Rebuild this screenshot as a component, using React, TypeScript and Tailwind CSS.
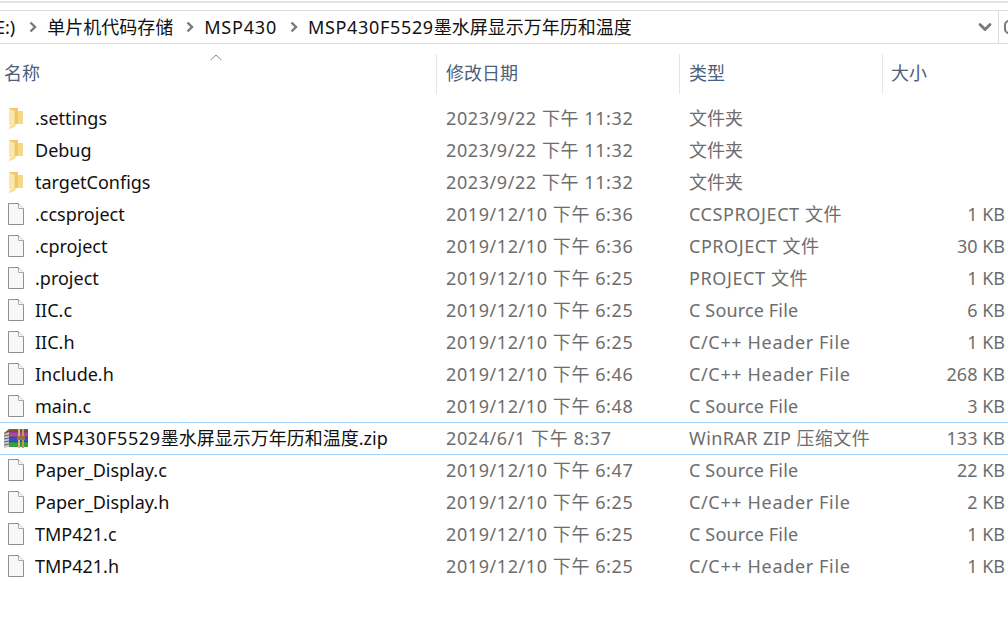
import { ChevronDown } from 'lucide-react';

type Kind = 'folder' | 'file' | 'zip';

const files: { name: string; date: string; type: string; size: string; kind: Kind }[] = [
    { name: '.settings', date: '2023/9/22 下午 11:32', type: '文件夹', size: '', kind: 'folder' },
    { name: 'Debug', date: '2023/9/22 下午 11:32', type: '文件夹', size: '', kind: 'folder' },
    { name: 'targetConfigs', date: '2023/9/22 下午 11:32', type: '文件夹', size: '', kind: 'folder' },
    { name: '.ccsproject', date: '2019/12/10 下午 6:36', type: 'CCSPROJECT 文件', size: '1 KB', kind: 'file' },
    { name: '.cproject', date: '2019/12/10 下午 6:36', type: 'CPROJECT 文件', size: '30 KB', kind: 'file' },
    { name: '.project', date: '2019/12/10 下午 6:25', type: 'PROJECT 文件', size: '1 KB', kind: 'file' },
    { name: 'IIC.c', date: '2019/12/10 下午 6:25', type: 'C Source File', size: '6 KB', kind: 'file' },
    { name: 'IIC.h', date: '2019/12/10 下午 6:25', type: 'C/C++ Header File', size: '1 KB', kind: 'file' },
    { name: 'Include.h', date: '2019/12/10 下午 6:46', type: 'C/C++ Header File', size: '268 KB', kind: 'file' },
    { name: 'main.c', date: '2019/12/10 下午 6:48', type: 'C Source File', size: '3 KB', kind: 'file' },
    { name: 'MSP430F5529墨水屏显示万年历和温度.zip', date: '2024/6/1 下午 8:37', type: 'WinRAR ZIP 压缩文件', size: '133 KB', kind: 'zip' },
    { name: 'Paper_Display.c', date: '2019/12/10 下午 6:47', type: 'C Source File', size: '22 KB', kind: 'file' },
    { name: 'Paper_Display.h', date: '2019/12/10 下午 6:25', type: 'C/C++ Header File', size: '2 KB', kind: 'file' },
    { name: 'TMP421.c', date: '2019/12/10 下午 6:25', type: 'C Source File', size: '1 KB', kind: 'file' },
    { name: 'TMP421.h', date: '2019/12/10 下午 6:25', type: 'C/C++ Header File', size: '1 KB', kind: 'file' },
];

// the fallback font runs narrower than the original on digits and capitals
const typeTracking: Record<string, string> = {
    '文件夹': '',
    'CCSPROJECT 文件': 'tracking-[0.6px]',
    'CPROJECT 文件': 'tracking-[0.55px]',
    'PROJECT 文件': 'tracking-[0.6px]',
    'C Source File': 'tracking-[0.15px]',
    'C/C++ Header File': 'tracking-[0.65px]',
    'WinRAR ZIP 压缩文件': 'tracking-[0.4px]',
};

function Sep() {
    return (
        <svg width="8" height="12" viewBox="0 0 8 12" className="shrink-0">
            <path d="M1.5 1.5 L6 6 L1.5 10.5" fill="none" stroke="#7a7a7a" strokeWidth="2.4" />
        </svg>
    );
}

function FileIcon({ kind }: { kind: Kind }) {
    if (kind === 'folder') {
        return (
            <svg width="16" height="22" viewBox="0 0 16 22">
                <path d="M1.5 1 H10 V17 H1.5 Z" fill="#f0c860" />
                <path d="M10 4 H15 V17 H10 Z" fill="#f6d88a" />
                <path d="M1.5 2 L7 4 V19 L1.5 21.5 Z" fill="#fbe7a8" />
                <path d="M7 4 V19 L1.5 21.5" fill="none" stroke="#e9c46a" strokeWidth="0.7" />
            </svg>
        );
    }
    if (kind === 'zip') {
        return (
            <svg width="26" height="22" viewBox="0 0 26 22">
                <path d="M1 5 L6 1 H25 V7 H1 Z" fill="#7a5a3c" />
                <path d="M1 6 L6 4 V19 L1 20 Z" fill="#c9c9c9" />
                <path d="M1 8 L6 7 M1 11 L6 10 M1 14 L6 13 M1 17 L6 16" stroke="#5f5f6a" strokeWidth="1" />
                <rect x="6" y="4" width="19" height="5" fill="#b441a6" />
                <rect x="6" y="9" width="19" height="5" fill="#2b56c4" />
                <rect x="6" y="14" width="19" height="5" fill="#35a040" />
                <path d="M6 4 H25 M6 9 H25 M6 14 H25" stroke="#3c3c50" strokeWidth="0.6" />
                <rect x="15" y="1" width="2" height="19" fill="#d8b878" />
                <rect x="19" y="1" width="2" height="19" fill="#c39a58" />
                <rect x="14" y="8" width="8" height="4" fill="#9a7434" />
            </svg>
        );
    }
    return (
        <svg width="18" height="22" viewBox="0 0 18 22">
            <path d="M1.5 0.5 H11.5 L16.5 5.5 V21.5 H1.5 Z" fill="#f7f8f9" stroke="#8f8f8f" />
            <path d="M11.5 0.5 V5.5 H16.5" fill="#fff" stroke="#a8a8a8" />
        </svg>
    );
}

function LongName({ rest }: { rest: string }) {
    return (
        <>
            <span className="tracking-[0.66px]">MSP430F5529</span>
            {rest}
        </>
    );
}

export default function App() {
    return (
        <div className="h-[621px] w-[1008px] overflow-hidden bg-white text-[18px] font-['Noto_Sans','Noto_Sans_CJK_SC',sans-serif]">
            <div className="h-[2px] mt-px bg-[#e3e3e3]"></div>

            {/* Address bar */}
            <div className="mt-[7px] h-[34px] flex items-center border-y border-[#dcdcdc] overflow-hidden">
                <div className="flex-1 flex items-center min-w-0 whitespace-nowrap text-[#111]">
                    <span className="ml-[-5px]">E:)</span>
                    <span className="ml-[14px]"><Sep /></span>
                    <span className="ml-[10px]">单片机代码存储</span>
                    <span className="ml-[13px]"><Sep /></span>
                    <span className="ml-[10px] tracking-[0.8px]">MSP430</span>
                    <span className="ml-[13px]"><Sep /></span>
                    <span className="ml-[10px]"><LongName rest="墨水屏显示万年历和温度" /></span>
                </div>
                <ChevronDown size={20} strokeWidth={3.5} className="text-[#7a7a7a] mr-[3px]" />
                <div className="w-[10px] h-full border-l border-[#dcdcdc] flex items-center pl-[5px] shrink-0">
                    <div className="w-[10px] h-[14px] shrink-0 rounded-full border-2 border-[#7a7a7a]"></div>
                </div>
            </div>

            {/* Column header */}
            <div className="relative mt-[10px] h-[40px] grid grid-cols-[436px_243px_203px_126px] text-[#4c607a]">
                <div className="pl-1 pb-px flex items-center">名称</div>
                <div className="pl-[9px] pb-px flex items-center border-l border-[#e5e5e5]">修改日期</div>
                <div className="pl-[9px] pb-px flex items-center border-l border-[#e5e5e5]">类型</div>
                <div className="pl-[8px] pb-px flex items-center border-l border-[#e5e5e5]">大小</div>
                <svg width="12" height="7" viewBox="0 0 12 7" className="absolute left-[210px] top-0">
                    <path d="M0.5 6 L6 1 L11.5 6" fill="none" stroke="#8a8a8a" />
                </svg>
            </div>

            {/* File rows */}
            <div className="mt-[8px]">
                {files.map((f) => (
                    <div
                        key={f.name}
                        className={`grid grid-cols-[436px_243px_203px_126px] items-center whitespace-nowrap border-y ${
                            f.kind === 'zip' ? 'h-[33px] -mb-px border-[#a6d8ff]' : 'h-[32px] border-transparent'
                        }`}
                    >
                        <div className="flex items-center min-w-0">
                            <div className="w-[35px] shrink-0 flex justify-center pr-[4px]">
                                <FileIcon kind={f.kind} />
                            </div>
                            <span className="text-[#111]">
                                {f.kind === 'zip' ? <LongName rest="墨水屏显示万年历和温度.zip" /> : f.name}
                            </span>
                        </div>
                        <div className="pl-[10px] text-[#6d6d6d] tracking-[0.58px]">{f.date}</div>
                        <div className={`pl-[10px] text-[#6d6d6d] ${typeTracking[f.type]}`}>{f.type}</div>
                        <div className="pr-[3px] text-right text-[#6d6d6d]">{f.size}</div>
                    </div>
                ))}
            </div>
        </div>
    );
}
